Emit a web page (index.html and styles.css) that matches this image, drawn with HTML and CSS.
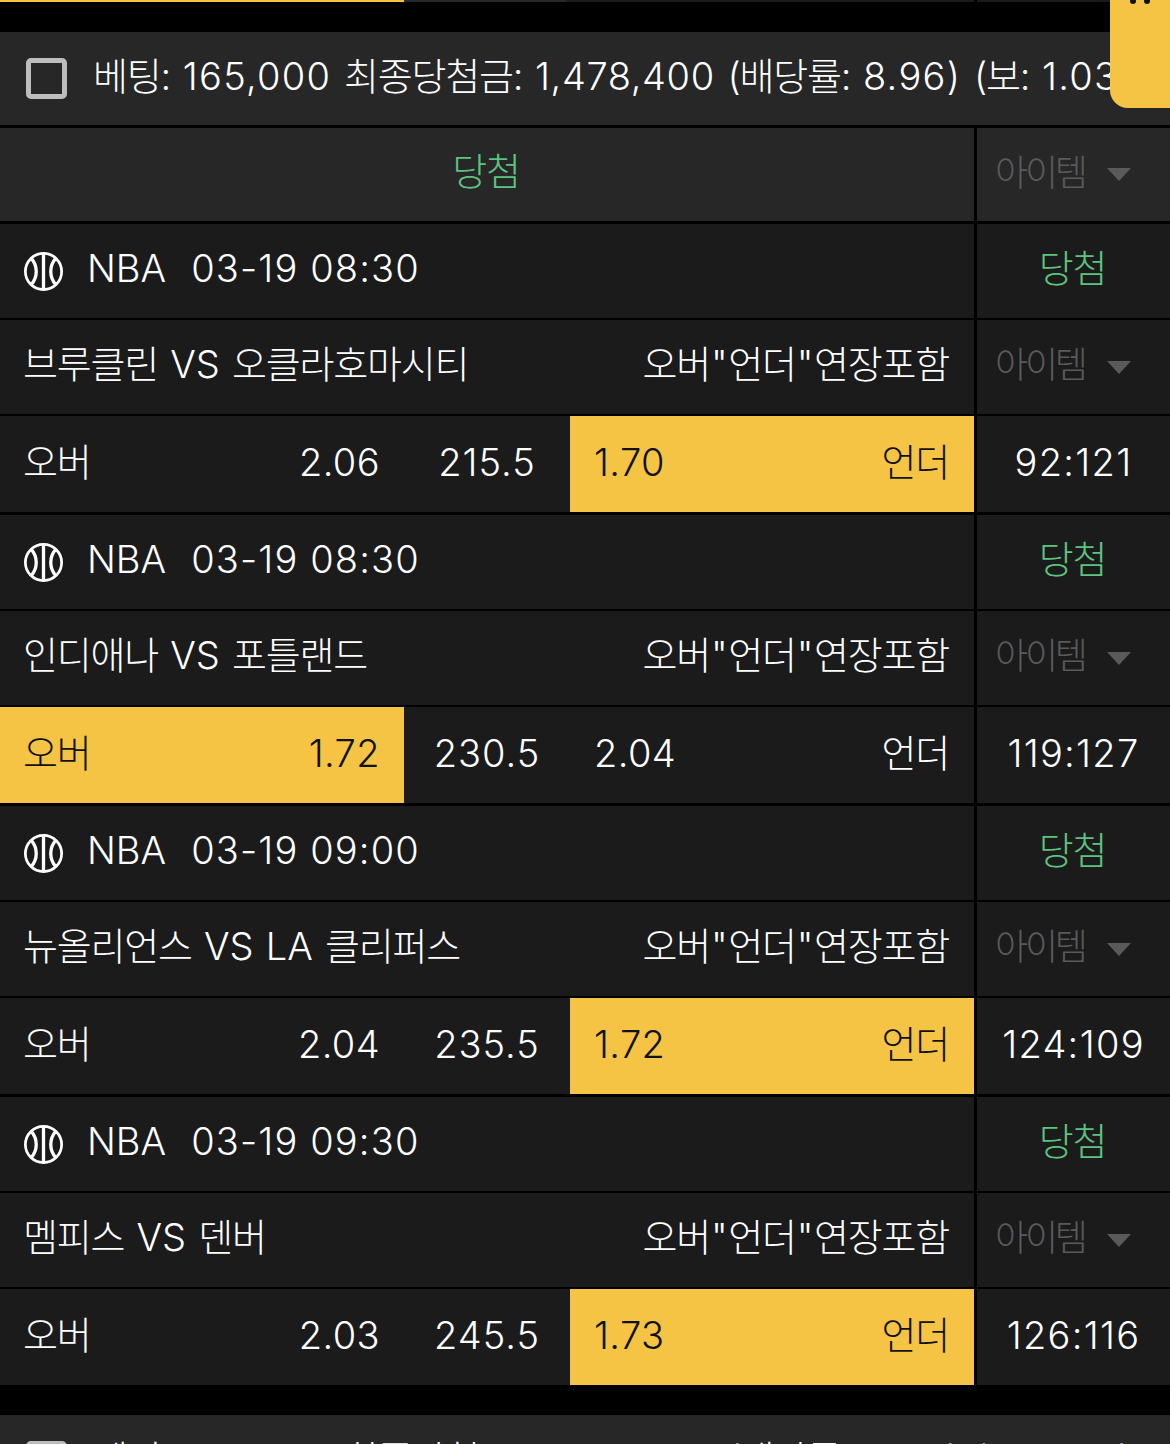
FILE: index.html
```html
<!DOCTYPE html>
<html lang="ko">
<head>
<meta charset="utf-8">
<title>베팅 내역</title>
<link rel="stylesheet" href="styles.css">
</head>
<body>
<div class="page">
  <div class="strip">
    <div class="strip-a"></div>
    <div class="strip-b"></div>
    <div class="strip-c"></div>
    <div class="strip-d"></div>
  </div>

  <section class="slip first">
    <div class="summary">
      <span class="check"></span>
      <span class="summary-text"><span class="ko">베팅:</span> <span class="num">165,000</span> <span class="ko">최종당첨금:</span> <span class="num long">1,478,400</span> <span class="ko">(배당률:</span> <span class="num">8.96)</span> <span class="ko">(보:</span> <span class="num">1.03)</span></span>
    </div>
    <div class="row head lift">
      <div class="cell main win center"><span class="ko">당첨</span></div>
      <div class="cell side item"><span class="ko tight">아이템</span><i class="caret"></i></div>
    </div>

    <div class="group">
      <div class="row"><div class="cell main league"><svg class="ball" viewBox="0 0 40 40"><use href="#ball"/></svg><span class="tx"><span class="lat">NBA</span><span class="num when">03-19 08:30</span></span></div><div class="cell side win center"><span class="ko">당첨</span></div></div>
      <div class="row"><div class="cell main split"><span class="teams"><span class="ko">브루클린</span> <span class="lat">VS</span> <span class="ko">오클라호마시티</span></span><span class="ko">오버<span class="q">"</span>언더<span class="q">"</span>연장포함</span></div><div class="cell side item"><span class="ko tight">아이템</span><i class="caret"></i></div></div>
      <div class="row odds"><div class="cell main pick"><div class="over"><span class="ko">오버</span><span class="num">2.06</span></div><div class="line num">215.5</div><div class="under hit"><span class="num">1.70</span><span class="ko">언더</span></div></div><div class="cell side center"><span class="num">92:121</span></div></div>
    </div>

    <div class="group">
      <div class="row"><div class="cell main league"><svg class="ball" viewBox="0 0 40 40"><use href="#ball"/></svg><span class="tx"><span class="lat">NBA</span><span class="num when">03-19 08:30</span></span></div><div class="cell side win center"><span class="ko">당첨</span></div></div>
      <div class="row"><div class="cell main split"><span class="teams"><span class="ko">인디애나</span> <span class="lat">VS</span> <span class="ko">포틀랜드</span></span><span class="ko">오버<span class="q">"</span>언더<span class="q">"</span>연장포함</span></div><div class="cell side item"><span class="ko tight">아이템</span><i class="caret"></i></div></div>
      <div class="row odds"><div class="cell main pick"><div class="over hit"><span class="ko">오버</span><span class="num">1.72</span></div><div class="line num">230.5</div><div class="under"><span class="num">2.04</span><span class="ko">언더</span></div></div><div class="cell side center"><span class="num">119:127</span></div></div>
    </div>

    <div class="group">
      <div class="row"><div class="cell main league"><svg class="ball" viewBox="0 0 40 40"><use href="#ball"/></svg><span class="tx"><span class="lat">NBA</span><span class="num when">03-19 09:00</span></span></div><div class="cell side win center"><span class="ko">당첨</span></div></div>
      <div class="row"><div class="cell main split"><span class="teams"><span class="ko">뉴올리언스</span> <span class="lat">VS LA</span> <span class="ko">클리퍼스</span></span><span class="ko">오버<span class="q">"</span>언더<span class="q">"</span>연장포함</span></div><div class="cell side item"><span class="ko tight">아이템</span><i class="caret"></i></div></div>
      <div class="row odds"><div class="cell main pick"><div class="over"><span class="ko">오버</span><span class="num">2.04</span></div><div class="line num">235.5</div><div class="under hit"><span class="num">1.72</span><span class="ko">언더</span></div></div><div class="cell side center"><span class="num">124:109</span></div></div>
    </div>

    <div class="group">
      <div class="row"><div class="cell main league"><svg class="ball" viewBox="0 0 40 40"><use href="#ball"/></svg><span class="tx"><span class="lat">NBA</span><span class="num when">03-19 09:30</span></span></div><div class="cell side win center"><span class="ko">당첨</span></div></div>
      <div class="row"><div class="cell main split"><span class="teams"><span class="ko">멤피스</span> <span class="lat">VS</span> <span class="ko">덴버</span></span><span class="ko">오버<span class="q">"</span>언더<span class="q">"</span>연장포함</span></div><div class="cell side item"><span class="ko tight">아이템</span><i class="caret"></i></div></div>
      <div class="row odds"><div class="cell main pick"><div class="over"><span class="ko">오버</span><span class="num">2.03</span></div><div class="line num">245.5</div><div class="under hit"><span class="num">1.73</span><span class="ko">언더</span></div></div><div class="cell side center"><span class="num">126:116</span></div></div>
    </div>
  </section>

  <section class="slip">
    <div class="summary">
      <span class="check"></span>
      <span class="summary-text"><span class="ko">베팅:</span> <span class="num">165,000</span> <span class="ko">최종당첨금:</span> <span class="num long">1,478,400</span> <span class="ko">(배당률:</span> <span class="num">8.96)</span> <span class="ko">(보:</span> <span class="num">1.03)</span></span>
    </div>
  </section>

  <div class="tab"><span class="dot"></span><span class="dot"></span></div>
</div>

<svg class="defs" width="0" height="0" aria-hidden="true">
  <symbol id="ball" viewBox="0 0 40 40">
    <circle cx="20" cy="20" r="18.6" fill="none" stroke="#fff" stroke-width="2.8"/>
    <path d="M20 2v36" fill="none" stroke="#fff" stroke-width="3.4"/>
    <path d="M7 6C14.4 14 14.4 26 7 34" fill="none" stroke="#fff" stroke-width="3.4"/>
    <path d="M33 6C25.6 14 25.6 26 33 34" fill="none" stroke="#fff" stroke-width="3.4"/>
  </symbol>
</svg>
</body>
</html>
```

FILE: styles.css
```css
* { box-sizing: border-box; }
html, body { margin: 0; padding: 0; background: #000; }
body {
  width: 1170px;
  height: 1444px;
  overflow: hidden;
  font-family: Inter, "Noto Sans CJK KR", sans-serif;
  font-weight: 300;
  font-size: 38px;
  color: #fff;
}
.page { position: relative; height: 1444px; overflow: hidden; }
.defs { position: absolute; }

.ko { letter-spacing: -1.2px; }
.tight { font-size: 36px; letter-spacing: -3.2px; }
.q { margin-left: 1px; letter-spacing: .5px; }
.num { letter-spacing: 1px; }
.lat { letter-spacing: 0; }
.when { margin-left: 25px; letter-spacing: 1.15px; }

.strip { display: flex; height: 2px; margin-bottom: 30px; }
.strip-a { width: 404px; background: #f5c445; }
.strip-b { width: 162px; background: #272727; }
.strip-c { width: 408px; background: #1b1b1c; }
.strip-d { width: 136px; margin-left: 3px; background: #1b1b1c; }

.slip { display: flex; flex-direction: column; }
.first { margin-bottom: 30px; }

.summary {
  display: flex;
  align-items: center;
  gap: 26px;
  height: 93px;
  padding-left: 26px;
  background: #272727;
  white-space: nowrap;
  overflow: hidden;
}
.summary-text { padding-bottom: 10px; word-spacing: 2px; }
.summary-text .num { letter-spacing: 1.3px; }
.summary-text .long { letter-spacing: .6px; }
.check {
  flex: none;
  width: 41px;
  height: 41px;
  border: 5px solid #bdbdbd;
  border-radius: 5px;
  background: #272727;
}

.row { display: flex; height: 94px; margin-bottom: 2px; }
.row.lift { margin-top: 3px; margin-bottom: 3px; height: 93px; }
.row.odds { height: 96px; margin-bottom: 3px; }
.group:last-child .row.odds { margin-bottom: 0; }

.cell { display: flex; align-items: center; background: #1b1b1c; }
.head .cell { background: #272727; }
.main { width: 974px; padding: 0 25px 0 23px; }
.side { width: 193px; margin-left: 3px; padding: 0 18px; }
.center { justify-content: center; }
.win { color: #5dc47f; }
.win > .ko { padding-bottom: 12px; }
.side.win { padding-right: 20px; }
.item { color: #5a5a5a; gap: 22px; }
.item > .ko { padding-bottom: 10px; }
.side > .num { padding-bottom: 5px; letter-spacing: 1.3px; }
.caret {
  width: 0;
  height: 0;
  border-left: 12.5px solid transparent;
  border-right: 12.5px solid transparent;
  border-top: 13px solid #5a5a5a;
}

.league { gap: 24px; padding-left: 24px; }
.tx { padding-bottom: 7px; }
.ball { width: 39px; height: 39px; flex: none; }
.split { justify-content: space-between; }
.split > span { padding-bottom: 12px; }
.teams { word-spacing: 1.5px; }
.pick { padding: 0; }
.over, .under { display: flex; align-items: center; justify-content: space-between; height: 100%; }
.over > .ko, .under > .ko { padding-bottom: 10px; }
.over > .num, .under > .num { padding-bottom: 5px; letter-spacing: .4px; }
.over { width: 404px; padding-left: 23px; padding-right: 24px; }
.line { width: 166px; height: 100%; padding-bottom: 5px; display: flex; align-items: center; justify-content: center; }
.under { width: 404px; padding-left: 24px; padding-right: 25px; }
.hit { background: #f5c445; color: #111; }

.tab {
  position: absolute;
  top: 0;
  right: 0;
  width: 60px;
  height: 108px;
  background: #f5c445;
  border-bottom-left-radius: 18px;
  display: flex;
  justify-content: center;
  gap: 8px;
}
.dot { width: 6px; height: 6px; margin-top: -2px; border-radius: 50%; background: #111; }
```
